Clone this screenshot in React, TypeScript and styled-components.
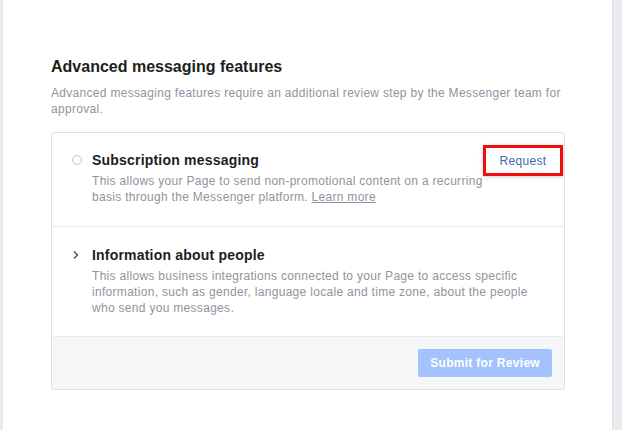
import styled, { createGlobalStyle } from "styled-components";

const GlobalStyle = createGlobalStyle`
    html, body {
        margin: 0;
        padding: 0;
        background: #e9ebee;
    }
    body {
        font-family: "Liberation Sans", Arial, sans-serif;
        color: #1c1e21;
    }
`;

const Page = styled.div`
    display: flex;
    width: 622px;
    height: 430px;
    padding-left: 3px;
    padding-right: 9px;
    box-sizing: border-box;
`;

const Panel = styled.div`
    flex: 1;
    background: #fff;
    border-right: 1px solid #dadde1;
    padding: 57px 47px 0 48px;
`;

const Heading = styled.h2`
    margin: 0;
    font-size: 16px;
    font-weight: bold;
    line-height: 20px;
    color: #1c1e21;
`;

const Lead = styled.p`
    margin: 8px 0 0;
    font-size: 12px;
    line-height: 16px;
    letter-spacing: 0.3px;
    color: #90949c;
`;

const Card = styled.div`
    margin-top: 15px;
    border: 1px solid #dddfe2;
    border-radius: 3px;
    overflow: hidden;
`;

const Row = styled.div<{ $last?: boolean }>`
    display: flex;
    align-items: flex-start;
    padding: ${({ $last }) => ($last ? "19px 12px 20px 20px" : "18px 4px 21px 20px")};
    border-bottom: 1px solid #e9ebee;
`;

const Marker = styled.div`
    width: 20px;
    height: 18px;
    flex: none;
    display: flex;
    align-items: center;
    justify-content: flex-start;
`;

const Radio = styled.span`
    width: 10px;
    height: 10px;
    border: 1px solid #bec3c9;
    border-radius: 50%;
    box-sizing: border-box;
    display: block;
`;

const RowBody = styled.div`
    flex: 1;
`;

const RowTitle = styled.div`
    font-size: 14px;
    font-weight: bold;
    line-height: 18px;
    letter-spacing: 0.2px;
    color: #1c1e21;
`;

const RowText = styled.div`
    margin-top: 4px;
    font-size: 12px;
    line-height: 16px;
    letter-spacing: 0.3px;
    color: #90949c;
    a {
        color: #90949c;
        text-decoration: underline;
    }
`;

const RequestBtn = styled.button`
    flex: none;
    margin-top: -3px;
    width: 74px;
    height: 25px;
    padding: 0;
    border: none;
    background: #fff;
    color: #4267b2;
    font-family: inherit;
    font-size: 12px;
    letter-spacing: 0.3px;
    box-shadow: 0 0 0 3px #f00d0d, 0 1px 4px 3px rgba(0, 0, 0, 0.2);
    cursor: pointer;
`;

const Footer = styled.div`
    display: flex;
    justify-content: flex-end;
    background: #f5f6f7;
    padding: 12px 12px 12px 0;
`;

const SubmitBtn = styled.button`
    height: 28px;
    padding: 0 12px;
    border: none;
    border-radius: 2px;
    background: #a3c2fe;
    color: #fff;
    font-family: inherit;
    font-size: 12px;
    font-weight: bold;
    letter-spacing: 0.3px;
`;

export default function App() {
    return (
        <>
            <GlobalStyle />
            <Page>
                <Panel>
                    <Heading>Advanced messaging features</Heading>
                    <Lead>
                        Advanced messaging features require an additional review step by the Messenger team for approval.
                    </Lead>
                    <Card>
                        <Row>
                            <Marker><Radio /></Marker>
                            <RowBody>
                                <RowTitle>Subscription messaging</RowTitle>
                                <RowText>
                                    This allows your Page to send non-promotional content on a recurring basis
                                    through the Messenger platform. <a href="#">Learn more</a>
                                </RowText>
                            </RowBody>
                            <RequestBtn type="button">Request</RequestBtn>
                        </Row>
                        <Row $last>
                            <Marker>
                                <svg width="8" height="10" viewBox="0 0 8 10" fill="none">
                                    <path d="M2 1.5L5.5 5L2 8.5" stroke="#4b4f56" strokeWidth="1.4" />
                                </svg>
                            </Marker>
                            <RowBody>
                                <RowTitle>Information about people</RowTitle>
                                <RowText>
                                    This allows business integrations connected to your Page to access specific
                                    information, such as gender, language locale and time zone, about the people
                                    who send you messages.
                                </RowText>
                            </RowBody>
                        </Row>
                        <Footer>
                            <SubmitBtn type="button">Submit for Review</SubmitBtn>
                        </Footer>
                    </Card>
                </Panel>
            </Page>
        </>
    );
}
